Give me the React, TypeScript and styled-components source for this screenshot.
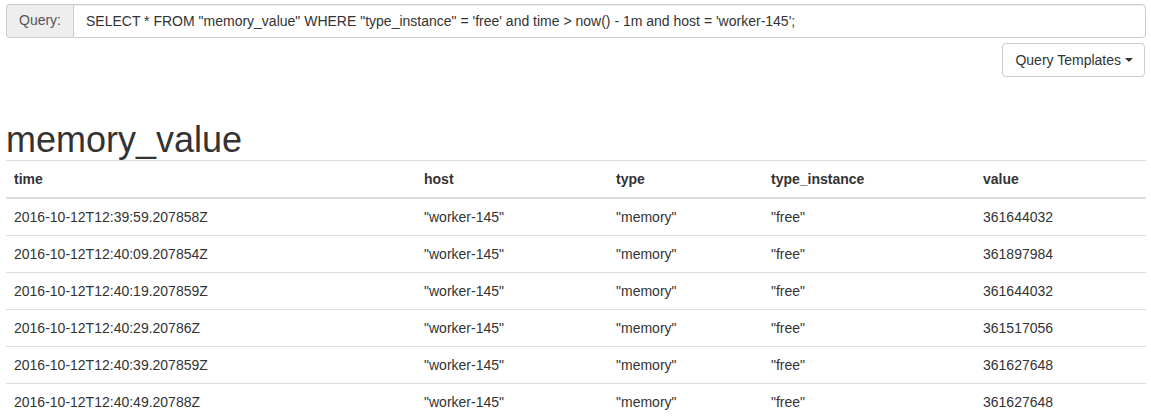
import React from 'react';
import styled, { createGlobalStyle } from 'styled-components';

const GlobalStyle = createGlobalStyle`
  html, body {
    margin: 0;
    padding: 0;
    background: #fff;
  }
  body {
    font-family: 'Liberation Sans', Arial, Helvetica, sans-serif;
    font-size: 14px;
    line-height: 1.42857;
    color: #333;
  }
  * {
    box-sizing: border-box;
  }
`;

interface Row {
  time: string;
  host: string;
  type: string;
  typeInstance: string;
  value: number;
}

const rows: Row[] = [
  { time: '2016-10-12T12:39:59.207858Z', host: 'worker-145', type: 'memory', typeInstance: 'free', value: 361644032 },
  { time: '2016-10-12T12:40:09.207854Z', host: 'worker-145', type: 'memory', typeInstance: 'free', value: 361897984 },
  { time: '2016-10-12T12:40:19.207859Z', host: 'worker-145', type: 'memory', typeInstance: 'free', value: 361644032 },
  { time: '2016-10-12T12:40:29.20786Z', host: 'worker-145', type: 'memory', typeInstance: 'free', value: 361517056 },
  { time: '2016-10-12T12:40:39.207859Z', host: 'worker-145', type: 'memory', typeInstance: 'free', value: 361627648 },
  { time: '2016-10-12T12:40:49.20788Z', host: 'worker-145', type: 'memory', typeInstance: 'free', value: 361627648 },
];

const columns = [
  { key: 'time', label: 'time', width: 410 },
  { key: 'host', label: 'host', width: 192 },
  { key: 'type', label: 'type', width: 155 },
  { key: 'typeInstance', label: 'type_instance', width: 212 },
  { key: 'value', label: 'value', width: 171 },
];

const App: React.FC = () => {
  const query =
    'SELECT * FROM "memory_value" WHERE "type_instance" = \'free\' and time > now() - 1m and host = \'worker-145\';';

  return (
    <Page>
      <GlobalStyle />
      <InputGroup>
        <Addon>Query:</Addon>
        <QueryInput type='text' defaultValue={query} readOnly />
      </InputGroup>
      <Toolbar>
        <DropdownButton type='button'>
          Query Templates <Caret />
        </DropdownButton>
      </Toolbar>
      <Title>memory_value</Title>
      <Table>
        <colgroup>
          {columns.map((c) => (
            <col key={c.key} style={{ width: c.width }} />
          ))}
        </colgroup>
        <thead>
          <tr>
            {columns.map((c) => (
              <Th key={c.key}>{c.label}</Th>
            ))}
          </tr>
        </thead>
        <tbody>
          {rows.map((r, i) => (
            <tr key={i}>
              <Td>{r.time}</Td>
              <Td>"{r.host}"</Td>
              <Td>"{r.type}"</Td>
              <Td>"{r.typeInstance}"</Td>
              <Td>{r.value}</Td>
            </tr>
          ))}
        </tbody>
      </Table>
    </Page>
  );
};

const Page = styled.div`
  padding: 4px 5px 0 6px;
`;

const InputGroup = styled.div`
  display: flex;
  height: 34px;
`;

const Addon = styled.span`
  display: flex;
  align-items: center;
  padding: 6px 12px;
  background: #eee;
  border: 1px solid #ccc;
  border-right: 0;
  border-radius: 4px 0 0 4px;
  font-size: 14px;
  color: #555;
  white-space: nowrap;
`;

const QueryInput = styled.input`
  flex: 1;
  height: 34px;
  padding: 6px 12px;
  font-family: inherit;
  font-size: 14px;
  color: #333;
  background: #fff;
  border: 1px solid #ccc;
  border-radius: 0 4px 4px 0;
  box-shadow: inset 0 1px 1px rgba(0, 0, 0, 0.075);
  outline: none;
`;

const Toolbar = styled.div`
  display: flex;
  justify-content: flex-end;
  margin-top: 5px;
  padding-right: 1px;
`;

const DropdownButton = styled.button`
  display: inline-flex;
  align-items: center;
  gap: 4px;
  height: 34px;
  padding: 6px 11px 6px 12px;
  font-family: inherit;
  font-size: 14px;
  color: #333;
  background: #fff;
  border: 1px solid #ccc;
  border-radius: 4px;
  cursor: pointer;
`;

const Caret = styled.span`
  display: inline-block;
  width: 0;
  height: 0;
  border-top: 4px solid #333;
  border-left: 4px solid transparent;
  border-right: 4px solid transparent;
`;

const Title = styled.h1`
  margin: 43px 0 0 0;
  font-size: 36px;
  font-weight: 500;
  line-height: 1.1;
  color: #333;
`;

const Table = styled.table`
  width: 100%;
  border-collapse: collapse;
  border-spacing: 0;
  border-top: 1px solid #ddd;
  table-layout: fixed;
`;

const Th = styled.th`
  padding: 8px;
  text-align: left;
  font-weight: bold;
  line-height: 20px;
  border-bottom: 2px solid #ddd;
`;

const Td = styled.td`
  padding: 8px;
  line-height: 20px;
  border-top: 1px solid #ddd;
  white-space: nowrap;
`;

export default App;
